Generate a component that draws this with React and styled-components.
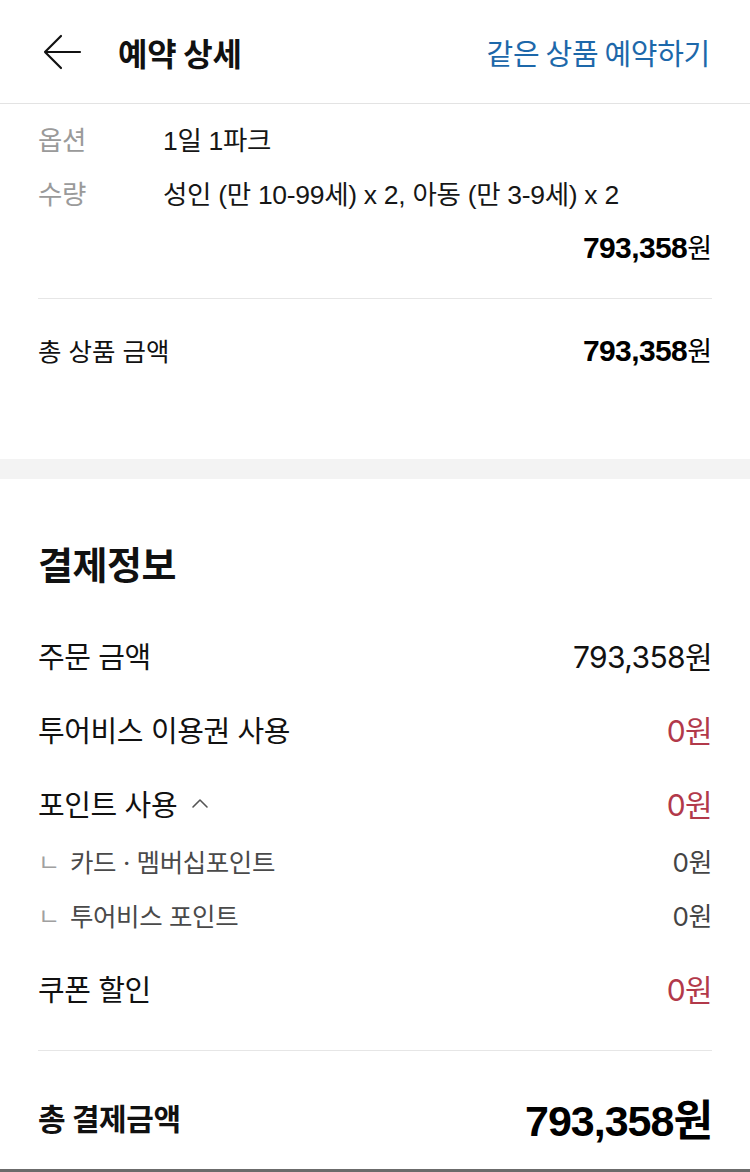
import React from "react";
import styled, { createGlobalStyle } from "styled-components";

const GlobalStyle = createGlobalStyle`
  html, body {
    margin: 0;
    padding: 0;
    background: #ffffff;
  }
  body {
    font-family: "Noto Sans CJK KR", "Liberation Sans", sans-serif;
    color: #111111;
  }
`;

const HELV = `"Liberation Sans", "Noto Sans CJK KR", sans-serif`;
const SF = `Inter, "Noto Sans CJK KR", sans-serif`;

const Page = styled.div`
  width: 750px;
  min-height: 1172px;
  box-sizing: border-box;
  border-bottom: 3px solid #6b6b6b;
  background: #fff;
`;

const Header = styled.header`
  height: 103px;
  border-bottom: 1px solid #e3e3e3;
  display: flex;
  align-items: center;
  padding: 0 40px 0 42px;
  box-sizing: content-box;
`;

const BackButton = styled.button`
  border: none;
  background: none;
  padding: 0;
  width: 40px;
  height: 40px;
  display: flex;
  align-items: center;
  justify-content: center;
  margin-right: 36px;
`;

const Title = styled.h1`
  margin: 0;
  font-size: 32px;
  font-weight: 700;
  letter-spacing: -0.3px;
  color: #111;
  flex: 1;
`;

const HeaderLink = styled.a`
  font-size: 29px;
  color: #1d68aa;
  letter-spacing: -0.3px;
  text-decoration: none;
`;

const ProductSection = styled.section`
  padding: 7px 38px 83px;
`;

const InfoRow = styled.div`
  height: 54px;
  display: flex;
  align-items: center;
  font-family: ${HELV};
  font-size: 26.5px;
  letter-spacing: -0.3px;
`;

const InfoLabel = styled.span`
  width: 125px;
  color: #9a9a9a;
`;

const InfoValue = styled.span`
  color: #161616;
`;

const PriceRow = styled.div`
  height: 54px;
  display: flex;
  align-items: center;
  justify-content: ${(p) => (p.$between ? "space-between" : "flex-end")};
  font-family: ${HELV};
  font-size: 25.5px;
  color: #111;
  margin-top: ${(p) => p.$mt || 0}px;
`;

const Amount = styled.span`
  font-family: ${HELV};
  font-size: 30px;
  font-weight: 700;
  letter-spacing: -0.6px;
  color: #000;
  b {
    font-family: "Noto Sans CJK KR", sans-serif;
    font-weight: 400;
    font-size: 27px;
    letter-spacing: 0;
  }
`;

const Divider = styled.hr`
  margin: ${(p) => p.$mt || 0}px 0 0;
  border: none;
  border-top: 1px solid #e6e6e6;
`;

const Band = styled.div`
  height: 20px;
  background: #f3f3f3;
`;

const PaySection = styled.section`
  padding: 61px 38px 15px 38px;
  font-family: ${SF};
`;

const SectionTitle = styled.h2`
  margin: 0 0 28px;
  height: 50px;
  line-height: 50px;
  font-size: 38px;
  font-weight: 700;
  letter-spacing: -0.5px;
  color: #111;
`;

const PayRow = styled.div`
  height: 74px;
  display: flex;
  align-items: center;
  justify-content: space-between;
  font-size: 29px;
  letter-spacing: -0.4px;
  color: #111;
  margin-top: ${(p) => p.$mt || 0}px;
`;

const Label = styled.span`
  display: flex;
  align-items: center;
`;

const Value = styled.span`
  font-size: 30px;
  letter-spacing: -0.6px;
  color: ${(p) => (p.$red ? "#b2394a" : "#111")};
`;

const SubList = styled.div`
  margin-top: -7px;
`;

const SubRow = styled.div`
  height: 54px;
  display: flex;
  align-items: center;
  justify-content: space-between;
  font-size: 25.5px;
  letter-spacing: -0.4px;
  color: #4a4a4a;
`;

const SubMark = styled.span`
  width: 32px;
  font-size: 24px;
  color: #a0a0a0;
  align-self: center;
`;

const SubValue = styled.span`
  font-size: 26px;
  color: #444;
`;

const TotalRow = styled(PayRow)`
  font-size: 30px;
  font-weight: 700;
  margin-top: 29px;
`;

const TotalAmount = styled.span`
  font-family: ${HELV};
  font-size: 43px;
  font-weight: 700;
  letter-spacing: -1px;
  color: #000;
`;

function BackIcon() {
  return (
    <svg width="40" height="36" viewBox="0 0 40 36" fill="none">
      <path d="M38 18H3M19 2L3 18l16 16" stroke="#111" strokeWidth="2.2" strokeLinecap="round" strokeLinejoin="round" />
    </svg>
  );
}

function ChevronUp() {
  return (
    <svg width="18" height="12" viewBox="0 0 18 12" fill="none" style={{ marginLeft: 14 }}>
      <path d="M2 10L9 3l7 7" stroke="#555" strokeWidth="1.6" strokeLinecap="round" strokeLinejoin="round" />
    </svg>
  );
}

const subs = [
  { label: "카드 · 멤버십포인트", value: "0원" },
  { label: "투어비스 포인트", value: "0원" },
];

export default function App() {
  return (
    <Page>
      <GlobalStyle />
      <Header>
        <BackButton aria-label="뒤로">
          <BackIcon />
        </BackButton>
        <Title>예약 상세</Title>
        <HeaderLink>같은 상품 예약하기</HeaderLink>
      </Header>

      <ProductSection>
        <InfoRow>
          <InfoLabel>옵션</InfoLabel>
          <InfoValue>1일 1파크</InfoValue>
        </InfoRow>
        <InfoRow>
          <InfoLabel>수량</InfoLabel>
          <InfoValue>성인 (만 10-99세) x 2, 아동 (만 3-9세) x 2</InfoValue>
        </InfoRow>
        <PriceRow>
          <Amount>
            793,358<b>원</b>
          </Amount>
        </PriceRow>
        <Divider $mt={25} />
        <PriceRow $between $mt={23}>
          <span>총 상품 금액</span>
          <Amount>
            793,358<b>원</b>
          </Amount>
        </PriceRow>
      </ProductSection>

      <Band />

      <PaySection>
        <SectionTitle>결제정보</SectionTitle>
        <PayRow>
          <Label>주문 금액</Label>
          <Value>793,358원</Value>
        </PayRow>
        <PayRow>
          <Label>투어비스 이용권 사용</Label>
          <Value $red>0원</Value>
        </PayRow>
        <PayRow>
          <Label>
            포인트 사용
            <ChevronUp />
          </Label>
          <Value $red>0원</Value>
        </PayRow>
        <SubList>
          {subs.map((s) => (
            <SubRow key={s.label}>
              <Label>
                <SubMark>ㄴ</SubMark>
                {s.label}
              </Label>
              <SubValue>{s.value}</SubValue>
            </SubRow>
          ))}
        </SubList>
        <PayRow $mt={10}>
          <Label>쿠폰 할인</Label>
          <Value $red>0원</Value>
        </PayRow>
        <Divider $mt={25} />
        <TotalRow>
          <Label>총 결제금액</Label>
          <TotalAmount>793,358원</TotalAmount>
        </TotalRow>
      </PaySection>
    </Page>
  );
}
